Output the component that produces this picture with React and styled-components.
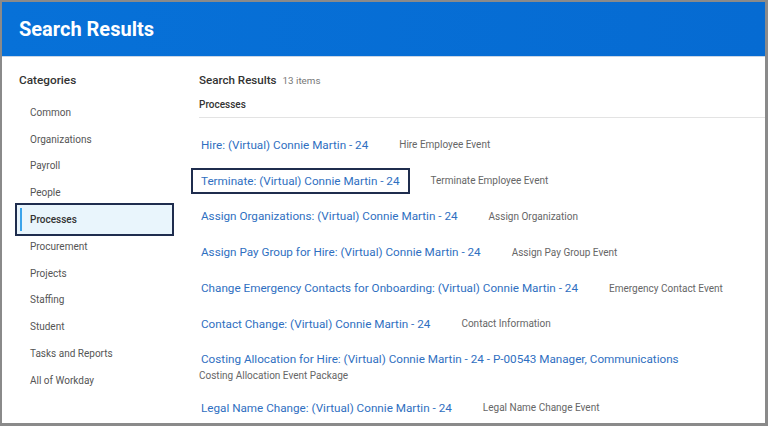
import React from 'react';
import styled, { createGlobalStyle } from 'styled-components';

const GlobalStyle = createGlobalStyle`
  html, body {
    margin: 0;
    padding: 0;
    background: #ffffff;
  }
  body {
    font-family: Roboto, "Liberation Sans", Arial, sans-serif;
  }
`;

const Frame = styled.div`
  box-sizing: border-box;
  width: 768px;
  height: 426px;
  overflow: hidden;
  border-style: solid;
  border-color: #8a8a8a;
  border-width: 2px 3px 3px 2px;
  background: #ffffff;
  display: flex;
  flex-direction: column;
`;

const Header = styled.header`
  height: 54px;
  flex-shrink: 0;
  background: linear-gradient(90deg, #0771d8 0%, #066bd2 100%);
  border-bottom: 1px solid #c9d6e6;
  display: flex;
  align-items: center;
  padding-left: 17px;
`;

const Title = styled.h1`
  margin: 0 0 1px;
  color: #ffffff;
  font-size: 20px;
  font-weight: 700;
`;

const Body = styled.div`
  flex: 1;
  display: flex;
`;

const Sidebar = styled.aside`
  width: 184px;
  flex-shrink: 0;
  padding: 15px 0 0 13px;
  box-sizing: border-box;
`;

const SideTitle = styled.div`
  padding-left: 4px;
  height: 16px;
  line-height: 16px;
  font-size: 11.8px;
  font-weight: 500;
  color: #333333;
  margin-bottom: 11px;
`;

const CatList = styled.ul`
  list-style: none;
  margin: 0;
  padding: 0;
`;

const Cat = styled.li`
  position: relative;
  box-sizing: border-box;
  width: 159px;
  height: ${(p) => (p.$active ? '32.8px' : '26.8px')};
  margin: ${(p) => (p.$active ? '-3px 0' : '0')};
  padding-left: 13px;
  display: flex;
  align-items: center;
  font-size: 10px;
  color: ${(p) => (p.$active ? '#333333' : '#555555')};
  font-weight: ${(p) => (p.$active ? 500 : 400)};
  background: ${(p) => (p.$active ? '#e9f5fc' : 'transparent')};
  border: 2px solid ${(p) => (p.$active ? '#1f2d4e' : 'transparent')};

  &::before {
    content: '';
    display: ${(p) => (p.$active ? 'block' : 'none')};
    position: absolute;
    left: 3px;
    top: 3px;
    bottom: 3px;
    width: 2px;
    background: #3aa3ea;
  }
`;

const Main = styled.main`
  flex: 1;
  padding-top: 15px;
  padding-left: 13px;
`;

const ResultsHead = styled.div`
  display: flex;
  align-items: baseline;
  gap: 6px;
  height: 16px;
  line-height: 16px;
`;

const ResultsTitle = styled.span`
  font-size: 11.6px;
  font-weight: 500;
  color: #333333;
`;

const Count = styled.span`
  font-size: 9.8px;
  color: #777777;
`;

const Section = styled.div`
  margin-top: 10px;
  padding-bottom: 6px;
  border-bottom: 1px solid #e3e3e3;
  font-size: 10px;
  font-weight: 500;
  color: #333333;
  line-height: 13px;
`;

const ResultList = styled.ul`
  list-style: none;
  margin: 9px 0 0 -8px;
  padding: 0;
`;

const Row = styled.li`
  height: ${(p) => (p.$stacked ? '48px' : '35.8px')};
  display: flex;
  flex-direction: ${(p) => (p.$stacked ? 'column' : 'row')};
  align-items: ${(p) => (p.$stacked ? 'flex-start' : 'center')};
  padding-top: ${(p) => (p.$stacked ? '4px' : '0')};
  box-sizing: border-box;
`;

const Link = styled.a`
  box-sizing: border-box;
  height: 26px;
  display: inline-flex;
  align-items: center;
  padding: 0 8px;
  border: 2px solid ${(p) => (p.$focused ? '#1f2d4e' : 'transparent')};
  font-size: 11.7px;
  color: #2f6fc1;
  text-decoration: none;
  white-space: nowrap;
  cursor: pointer;
`;

const Desc = styled.span`
  margin-left: ${(p) => (p.$stacked ? '8px' : '21px')};
  margin-top: ${(p) => (p.$stacked ? '-2px' : '0')};
  font-size: 10px;
  color: #666666;
  white-space: nowrap;
`;

const categories = [
  'Common',
  'Organizations',
  'Payroll',
  'People',
  'Processes',
  'Procurement',
  'Projects',
  'Staffing',
  'Student',
  'Tasks and Reports',
  'All of Workday',
];

const results = [
  { title: 'Hire: (Virtual) Connie Martin - 24', desc: 'Hire Employee Event' },
  { title: 'Terminate: (Virtual) Connie Martin - 24', desc: 'Terminate Employee Event', focused: true },
  { title: 'Assign Organizations: (Virtual) Connie Martin - 24', desc: 'Assign Organization' },
  { title: 'Assign Pay Group for Hire: (Virtual) Connie Martin - 24', desc: 'Assign Pay Group Event' },
  { title: 'Change Emergency Contacts for Onboarding: (Virtual) Connie Martin - 24', desc: 'Emergency Contact Event' },
  { title: 'Contact Change: (Virtual) Connie Martin - 24', desc: 'Contact Information' },
  {
    title: 'Costing Allocation for Hire: (Virtual) Connie Martin - 24 - P-00543 Manager, Communications',
    desc: 'Costing Allocation Event Package',
    stacked: true,
  },
  { title: 'Legal Name Change: (Virtual) Connie Martin - 24', desc: 'Legal Name Change Event' },
];

export default function App() {
  return (
    <>
      <GlobalStyle />
      <Frame>
        <Header>
          <Title>Search Results</Title>
        </Header>
        <Body>
          <Sidebar>
            <SideTitle>Categories</SideTitle>
            <CatList>
              {categories.map((c) => (
                <Cat key={c} $active={c === 'Processes'}>
                  {c}
                </Cat>
              ))}
            </CatList>
          </Sidebar>
          <Main>
            <ResultsHead>
              <ResultsTitle>Search Results</ResultsTitle>
              <Count>13 items</Count>
            </ResultsHead>
            <Section>Processes</Section>
            <ResultList>
              {results.map((r) => (
                <Row key={r.title} $stacked={r.stacked}>
                  <Link $focused={r.focused}>{r.title}</Link>
                  <Desc $stacked={r.stacked}>{r.desc}</Desc>
                </Row>
              ))}
            </ResultList>
          </Main>
        </Body>
      </Frame>
    </>
  );
}
